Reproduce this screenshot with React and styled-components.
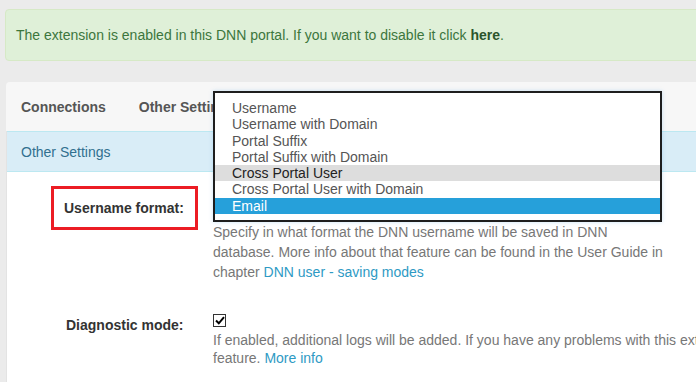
import React from "react";
import styled, { createGlobalStyle } from "styled-components";

const Global = createGlobalStyle`
  html, body { margin: 0; padding: 0; background: #ebebeb; overflow: hidden; }
  body { font-family: "Liberation Sans", Arial, sans-serif; font-size: 14px; line-height: 20px; color: #333; }
`;

const Page = styled.div`
  width: 800px;
  padding: 9px 0 0 5px;
  position: relative;
`;

const Alert = styled.div`
  background: #dff0d8;
  border: 1px solid #d6e9c6;
  border-radius: 4px;
  color: #3c763d;
  padding: 15px 10px;
  font-size: 14px;
  margin-bottom: 21px;
  b { color: #2b542c; }
`;

const Tabs = styled.div`
  margin-left: 1px;
  background: #f7f7f7;
  border-radius: 4px 4px 0 0;
  height: 49px;
  display: flex;
  align-items: center;
  padding-left: 15px;
  gap: 33px;
`;

const Tab = styled.div`
  font-weight: bold;
  color: #555;
  font-size: 14px;
`;

const Panel = styled.div`
  margin-left: 1px;
  background: #fff;
  border-left: 1px solid #e3e3e3;
  min-height: 260px;
`;

const Heading = styled.div`
  background: #d9edf7;
  border-top: 1px solid #bce8f1;
  border-bottom: 1px solid #bce8f1;
  color: #31708f;
  height: 39px;
  display: flex;
  align-items: center;
  padding-left: 14px;
  font-size: 14px;
`;

const Body = styled.div`
  padding-top: 14px;
  position: relative;
`;

const Row = styled.div`
  display: grid;
  grid-template-columns: 162px 1fr;
  padding-left: 44px;
  margin-bottom: ${(p) => p.$gap || 0}px;
`;

const Label = styled.div`
  font-weight: bold;
  color: #333;
  font-size: 14px;
  padding-left: 15px;
  padding-top: 1px;
`;

const MarkedLabel = styled(Label)`
  height: 38px;
  width: 131px;
  border: 3px solid #ec1c24;
  padding: 0 0 0 10px;
  display: flex;
  align-items: center;
`;

const Field = styled.div`
  display: flex;
  flex-direction: column;
`;

const SelectSlot = styled.div`
  height: 36px;
`;

const Help = styled.div`
  color: #777;
  font-size: 14px;
  line-height: ${(p) => p.$lh || 20}px;
  width: ${(p) => (p.$nowrap ? "auto" : "452px")};
  white-space: ${(p) => (p.$nowrap ? "nowrap" : "normal")};
  a { color: #2e9ac4; text-decoration: none; }
`;

const Check = styled.div`
  width: 11px;
  height: 11px;
  border: 1px solid #333;
  background: #fff;
  display: flex;
  align-items: center;
  justify-content: center;
  margin: 0 0 4px;
`;

const List = styled.div`
  position: absolute;
  left: 213px;
  top: 91px;
  width: 445px;
  border: 2px solid #1e1e1e;
  background: #fff;
  padding: 7px 0 6px;
  box-shadow: 0 0 4px rgba(102, 175, 233, 0.35);
  font-family: "Liberation Sans", Arial, sans-serif;
  font-size: 14px;
  line-height: 16.3px;
  z-index: 5;
`;

const Option = styled.div`
  padding-left: 17px;
  color: ${(p) => (p.$sel ? "#fff" : p.$hover ? "#222" : "#555")};
  background: ${(p) => (p.$sel ? "#26a0da" : p.$hover ? "#dddddd" : "transparent")};
`;

const options = [
  "Username",
  "Username with Domain",
  "Portal Suffix",
  "Portal Suffix with Domain",
  "Cross Portal User",
  "Cross Portal User with Domain",
  "Email",
];

export default function App() {
  return (
    <>
      <Global />
      <Page>
        <Alert>
          The extension is enabled in this DNN portal. If you want to disable it click <b>here</b>.
        </Alert>
        <Tabs>
          <Tab>Connections</Tab>
          <Tab>Other Settings</Tab>
        </Tabs>
        <Panel>
          <Heading>Other Settings</Heading>
          <Body>
            <Row $gap={32}>
              <MarkedLabel>Username format:</MarkedLabel>
              <Field>
                <SelectSlot />
                <Help>
                  Specify in what format the DNN username will be saved in DNN database. More info about that feature can be found in the User Guide in chapter <a href="#">DNN user - saving modes</a>
                </Help>
              </Field>
            </Row>
            <Row>
              <Label>Diagnostic mode:</Label>
              <Field>
                <Check>
                  <svg width="10" height="9" viewBox="0 0 10 9">
                    <path d="M1 4.5 L3.8 7.3 L9 1.2" fill="none" stroke="#000" strokeWidth="2" />
                  </svg>
                </Check>
                <Help $nowrap $lh={18}>
                  If enabled, additional logs will be added. If you have any problems with this extension, please enable this
                  <br />
                  feature. <a href="#">More info</a>
                </Help>
              </Field>
            </Row>
          </Body>
        </Panel>
        <List>
          {options.map((o) => (
            <Option key={o} $hover={o === "Cross Portal User"} $sel={o === "Email"}>
              {o}
            </Option>
          ))}
        </List>
      </Page>
    </>
  );
}
